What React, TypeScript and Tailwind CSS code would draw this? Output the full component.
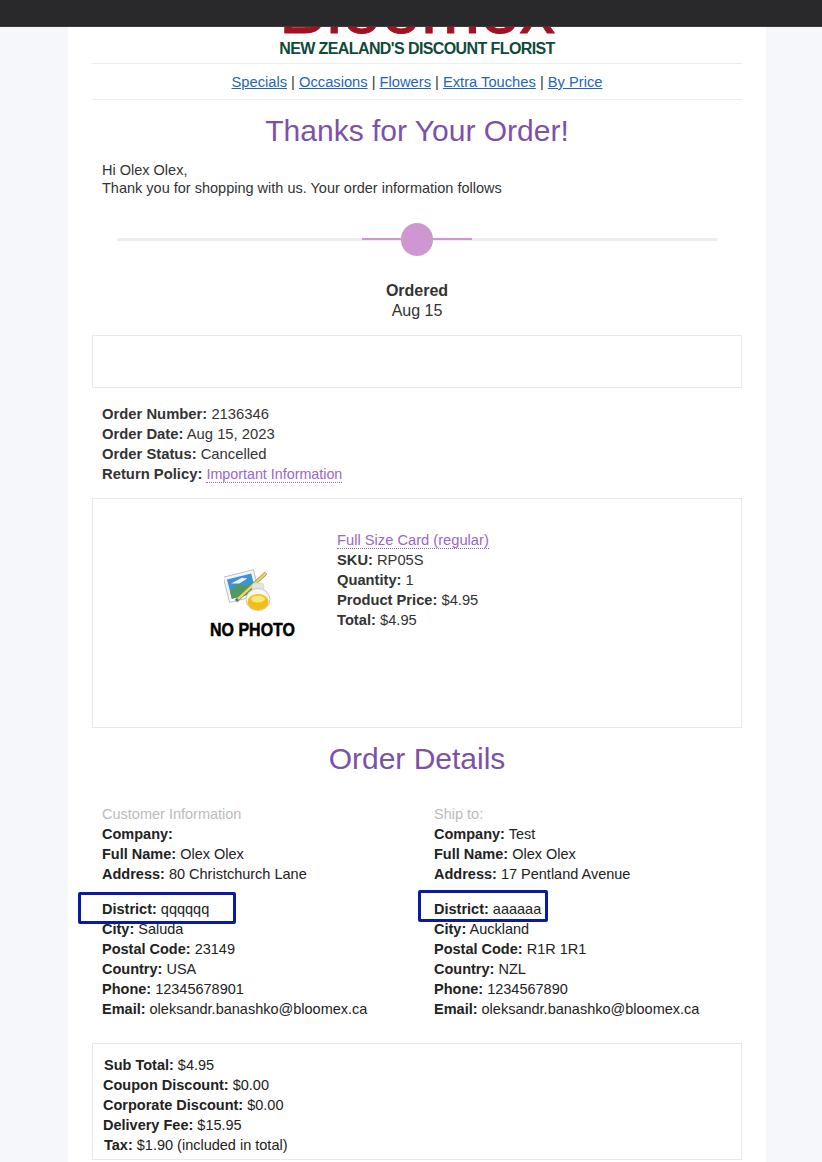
import React from 'react';

const Sep = () => <span className="text-[#333]"> | </span>;

const NavLink = ({ children }: { children: React.ReactNode }) => (
    <a href="#" className="text-[#1f66b8] underline">{children}</a>
);

const Row = ({ label, value }: { label: string; value: string }) => (
    <div>
        <b className="font-bold">{label}</b> {value}
    </div>
);

const NoPhotoIcon = () => (
    <svg width="50" height="44" viewBox="0 0 50 44" className="mr-[7px]">
        <g transform="rotate(-14 18 18)">
            <rect x="2" y="5" width="31" height="26" fill="#f4f6fa" stroke="#b8bcc6" strokeWidth="1" />
            <rect x="5" y="8" width="25" height="20" fill="#3f92d8" />
            <path d="M5 20 L14 15 L23 19 L30 16 V28 H5 Z" fill="#4f9a62" />
            <path d="M8 13 L20 10 L25 12 L16 15 Z" fill="#e8f3fb" />
        </g>
        <path d="M12 33 L42 5" stroke="#6b7280" strokeWidth="3.5" />
        <path d="M14 31 L42 5" stroke="#ecd64e" strokeWidth="2.5" />
        <rect x="28" y="15" width="12" height="9" rx="3" fill="#e3e4e8" stroke="#c4c6cc" strokeWidth="0.5" />
        <ellipse cx="34" cy="31.5" rx="12" ry="11" fill="#f8f8f2" stroke="#c9c9b8" strokeWidth="1" />
        <ellipse cx="34" cy="34" rx="10.5" ry="8" fill="#f1bd17" />
        <ellipse cx="34" cy="31" rx="7" ry="3.5" fill="#fbe77a" />
    </svg>
);

export default function App() {
    return (
        <div className="h-[1162px] overflow-hidden bg-[#f6f7fb] font-['Liberation_Sans',Arial,sans-serif] text-[14.5px] leading-[20px] text-[#333]">
            <div className="relative z-10 h-[27px] bg-[#29292b] border-b border-[#3a3a3c]" />
            <div className="ml-[68px] w-[698px] h-[1135px] bg-white px-[24px] overflow-hidden">
                <div className="h-[36px] relative">
                    <div className="absolute left-0 right-0 bottom-[19px] text-center text-[71px] leading-[70px] text-[#a5101f] [-webkit-text-stroke:1px_#a5101f]">Bloomex</div>
                    <div className="absolute left-0 right-0 bottom-[6px] text-center text-[16px] leading-[16px] font-bold tracking-[-0.6px] text-[#0f4a3a]">NEW ZEALAND'S DISCOUNT FLORIST</div>
                </div>
                <div className="h-[37px] border-y border-[#eeeeee] flex items-center justify-center whitespace-pre text-[14.7px]">
                    <NavLink>Specials</NavLink><Sep /><NavLink>Occasions</NavLink><Sep /><NavLink>Flowers</NavLink><Sep /><NavLink>Extra Touches</NavLink><Sep /><NavLink>By Price</NavLink>
                </div>
                <h1 className="mt-[11px] text-center text-[30px] leading-[40px] text-[#7b52a8]">Thanks for Your Order!</h1>
                <div className="mt-[10px] pl-[10px] leading-[18px]">
                    <div>Hi Olex Olex,</div>
                    <div>Thank you for shopping with us. Your order information follows</div>
                </div>
                <div className="mt-[26px] mx-[25px] h-[32px] relative flex items-center">
                    <div className="h-[3px] w-full bg-[#eeecf0]" />
                    <div className="absolute left-[245px] w-[110px] h-[2px] bg-[#cf97d2]" />
                    <div className="absolute left-[284px] w-[32px] h-[33px] rounded-full bg-[#cf97d2]" />
                </div>
                <div className="mt-[26px] text-center text-[16px]">
                    <div className="font-bold">Ordered</div>
                    <div>Aug 15</div>
                </div>
                <div className="mt-[14px] h-[53px] border border-[#e9e9e9]" />
                <div className="mt-[16px] pl-[10px] text-[14.8px]">
                    <Row label="Order Number:" value="2136346" />
                    <Row label="Order Date:" value="Aug 15, 2023" />
                    <Row label="Order Status:" value="Cancelled" />
                    <div>
                        <b>Return Policy:</b>{' '}
                        <a href="#" className="text-[14.3px] text-[#9a68c4] border-b border-dotted border-[#9a68c4]">Important Information</a>
                    </div>
                </div>
                <div className="mt-[14px] h-[230px] border border-[#e9e9e9] flex">
                    <div className="w-[244px] flex flex-col items-center pt-[69px] pl-[74px]">
                        <NoPhotoIcon />
                        <div className="mt-[8px] text-[19px] leading-[20px] font-bold text-black whitespace-nowrap scale-x-[0.84] [-webkit-text-stroke:0.5px_#000]">NO PHOTO</div>
                    </div>
                    <div className="pt-[31px] text-[14.7px]">
                        <a href="#" className="text-[#9a68c4] border-b border-dotted border-[#9a68c4]">Full Size Card (regular)</a>
                        <Row label="SKU:" value="RP05S" />
                        <Row label="Quantity:" value="1" />
                        <Row label="Product Price:" value="$4.95" />
                        <Row label="Total:" value="$4.95" />
                    </div>
                </div>
                <h2 className="mt-[11px] text-center text-[30px] leading-[40px] text-[#7b52a8]">Order Details</h2>
                <div className="mt-[25px] grid grid-cols-[332px_1fr] pl-[10px] text-[#222] relative">
                    <div>
                        <div className="text-[#bbbbbb]">Customer Information</div>
                        <Row label="Company:" value="" />
                        <Row label="Full Name:" value="Olex Olex" />
                        <Row label="Address:" value="80 Christchurch Lane" />
                        <div className="mt-[15px]"><Row label="District:" value="qqqqqq" /></div>
                        <Row label="City:" value="Saluda" />
                        <Row label="Postal Code:" value="23149" />
                        <Row label="Country:" value="USA" />
                        <Row label="Phone:" value="12345678901" />
                        <Row label="Email:" value="oleksandr.banashko@bloomex.ca" />
                    </div>
                    <div>
                        <div className="text-[#bbbbbb]">Ship to:</div>
                        <Row label="Company:" value="Test" />
                        <Row label="Full Name:" value="Olex Olex" />
                        <Row label="Address:" value="17 Pentland Avenue" />
                        <div className="mt-[15px]"><Row label="District:" value="aaaaaa" /></div>
                        <Row label="City:" value="Auckland" />
                        <Row label="Postal Code:" value="R1R 1R1" />
                        <Row label="Country:" value="NZL" />
                        <Row label="Phone:" value="1234567890" />
                        <Row label="Email:" value="oleksandr.banashko@bloomex.ca" />
                    </div>
                    <div className="absolute left-[-14px] top-[88px] w-[158px] h-[32px] border-[3px] border-[#0a1aa5] rounded-[2px]" />
                    <div className="absolute left-[326px] top-[86px] w-[130px] h-[32px] border-[3px] border-[#0a1aa5] rounded-[2px]" />
                </div>
                <div className="mt-[24px] h-[117px] border border-[#e9e9e9] pl-[10px] pt-[11px] text-[#222]">
                    <div className="ml-px"><Row label="Sub Total:" value="$4.95" /></div>
                    <Row label="Coupon Discount:" value="$0.00" />
                    <Row label="Corporate Discount:" value="$0.00" />
                    <Row label="Delivery Fee:" value="$15.95" />
                    <div className="ml-px"><Row label="Tax:" value="$1.90 (included in total)" /></div>
                </div>
            </div>
        </div>
    );
}
